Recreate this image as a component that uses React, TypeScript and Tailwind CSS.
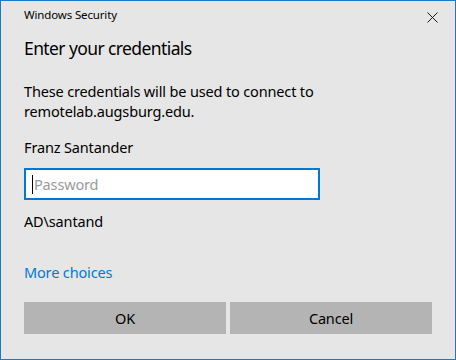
// Windows Security credential prompt.

const FONT = { fontFamily: '"Segoe UI", "Noto Sans", "Open Sans", sans-serif' };

function CloseIcon() {
  return (
    <svg width="11" height="11" viewBox="0 0 11 11" className="mt-[5px]">
      <path d="M0.5 0.5 L10.5 10.5 M10.5 0.5 L0.5 10.5" stroke="#1a1a1a" strokeWidth="1" fill="none" />
    </svg>
  );
}

export default function App() {
  return (
    <div
      className="flex h-[360px] w-[456px] flex-col border border-[#1979ca] bg-[#e6e6e6] text-black"
      style={FONT}
    >
      <div className="mt-[6px] flex items-start justify-between pl-[23px] pr-[17px]">
        <span className="text-[11.5px] leading-[16px] tracking-[-0.15px]">Windows Security</span>
        <CloseIcon />
      </div>

      <div className="flex flex-col px-[23px] text-[14.5px] leading-[20px] tracking-[-0.15px]">
        <h1 className="mt-[11px] text-[17.5px] leading-[28px] tracking-[-0.6px]">
          Enter your credentials
        </h1>

        <p className="mt-[19px]">
          These credentials will be used to connect to
          <br />
          remotelab.augsburg.edu.
        </p>

        <p className="mt-[16px]">Franz Santander</p>

        <div className="mt-[11px] flex h-[32px] w-[296px] items-center border-2 border-[#0078d7] bg-white pl-[6px]">
          <span className="h-[19px] w-[1px] bg-black" />
          <span className="ml-[1px] text-[#9a9a9a]">Password</span>
        </div>

        <p className="mt-[11px]">AD\santand</p>

        <a className="mt-[31px] text-[#0078d7]" href="#">
          More choices
        </a>

        <div className="mt-[20px] grid grid-cols-2 gap-[4px]">
          <button className="h-[32px] bg-[#b4b4b4]">OK</button>
          <button className="h-[32px] bg-[#b4b4b4]">Cancel</button>
        </div>
      </div>
    </div>
  );
}
